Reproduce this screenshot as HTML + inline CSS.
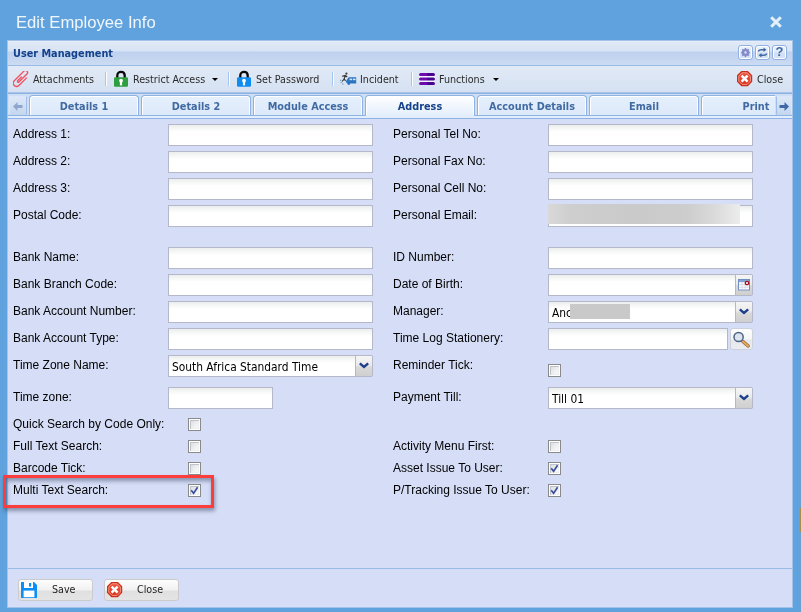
<!DOCTYPE html>
<html><head><meta charset="utf-8"><title>Edit Employee Info</title>
<style>
*{box-sizing:border-box;margin:0;padding:0}
html,body{width:801px;height:612px;overflow:hidden}
body{background:#60a2dd;position:relative;font-family:"Liberation Sans",Arial,sans-serif;font-size:12px;color:#000}
.abs{position:absolute}
.th{font-family:"DejaVu Sans Condensed","Liberation Sans",sans-serif}
#title{left:16px;top:10.5px;color:#f1f6fb;font-size:16.65px;line-height:24px;white-space:nowrap;font-family:"Liberation Sans",sans-serif}
#panel{left:7px;top:40px;width:786px;height:568px;border:1px solid #a3c2ea;background:#d6def7;overflow:hidden}
#hdr{left:0;top:0;width:784px;height:25px;background:linear-gradient(#eef3fb 0,#dfe9f6 1px,#d8e4f5 10px,#bed1ee 11px,#cbdbf2 24px);border-bottom:1px solid #99bbe8}
#hdr .t{left:5px;top:6px;font-weight:bold;font-size:10.8px;color:#15428b;line-height:14px;white-space:nowrap}
.tool{top:4px;width:15px;height:15px;border:1px solid #8fb0e0;border-radius:3px;background:linear-gradient(#e9f1fc 0,#e1ebf9 6px,#d2e0f5 7px,#d6e3f6 100%);box-shadow:inset 0 0 0 1px #fff}
#tb{left:0;top:25px;width:784px;height:27px;background:linear-gradient(#e2eaf6,#d5e1f2);border-bottom:1px solid #a9c4e9}
.bt{top:7px;font-size:10.65px;line-height:14px;color:#2a2a2a;white-space:nowrap}
.sep{top:6px;width:2px;height:14px;border-left:1px solid #a4c6f2;border-right:1px solid #fff}
.dd{top:11.8px;width:0;height:0;border:3px solid transparent;border-top:3.6px solid #000;border-bottom:none}
#strip{left:0;top:52px;width:784px;height:22px;background:#cedff5;border-top:1px solid #8db2e3;overflow:hidden}
#strip2{left:0;top:74px;width:784px;height:4px;background:#e3eefc;border-top:1px solid #8db2e3;border-bottom:1px solid #8db2e3}
.tab{top:1px;width:110px;height:20px;border:1px solid #8db2e3;border-bottom:none;border-radius:4px 4px 0 0;background:linear-gradient(#e6f0fd,#dce9f9);box-shadow:inset 1px 1px 0 #fff,inset -1px 0 0 #fff;text-align:center;font-weight:bold;font-size:10.8px;line-height:14px;padding-top:4px;color:#416aa3;white-space:nowrap;overflow:hidden}
.tab.on{height:21px;background:linear-gradient(#ffffff,#e3eefc);color:#15428b}
.scr{top:2px;height:19px;background:linear-gradient(#dce8f8,#c5d7ef);border:1px solid #b5cdef}
.lb{font-size:12px;line-height:15px;white-space:nowrap;color:#000}
.in{height:22px;border:1px solid #b5b8c8;background:linear-gradient(#eceeee 0,#fff 7px) #fff}
.trg{width:17px;height:22px;border:1px solid #b5b8c8;border-left:none;border-radius:0 2px 2px 0;background:linear-gradient(#f5f5f5 0,#ebebeb 45%,#d9d9d9 55%,#cfcfcf 100%)}
.cb{width:13px;height:13px;border:1px solid #8a8a8a;background:linear-gradient(135deg,#d3d7db,#f6f6f6 70%);box-shadow:inset 0 0 0 1px #fff,inset 2px 2px 0 0 #bfc4cc,inset -2px -2px 0 0 #eceef0}
#ft{left:0;top:527px;width:784px;height:40px;border-top:1px solid #99bbe8;background:#d6def7}
.fb{top:10px;height:22px;width:75px;border:1px solid #cbcbcb;border-radius:3px;background:linear-gradient(#fdfdfd 0,#f1f1f1 10px,#e0e0e0 11px,#e4e4e4 100%);font-size:10.65px;line-height:14px;color:#222}
</style></head><body>
<div id="wrap" style="position:absolute;left:0;top:0;width:801px;height:612px;will-change:transform">
<div class="abs" id="title">Edit Employee Info</div>
<svg class="abs" style="left:769px;top:15px" width="14" height="14" viewBox="0 0 14 14"><path d="M2.2 2.2 L11.8 11.8 M11.8 2.2 L2.2 11.8" stroke="#e6f0f9" stroke-width="3" /></svg>
<div class="abs" id="panel">
 <div class="abs" id="hdr"><div class="abs t th">User Management</div>
  <div class="abs tool" style="left:730px"><svg class="abs" style="left:1px;top:1px" width="11" height="11" viewBox="0 0 11 11"><circle cx="5.5" cy="5.5" r="2.4" fill="none" stroke="#838bc9" stroke-width="2.4"/><path d="M5.5 1V2.4M5.5 8.6V10M1 5.5H2.4M8.6 5.5H10M2.3 2.3L3.3 3.3M7.7 7.7L8.7 8.7M2.3 8.7L3.3 7.7M7.7 3.3L8.7 2.3" stroke="#838bc9" stroke-width="1.7"/></svg></div>
  <div class="abs tool" style="left:747px"><svg class="abs" style="left:1px;top:1px" width="11" height="11" viewBox="0 0 11 11"><path d="M1.5 4.5 C1.5 3 3 2.8 4.5 2.8 H7" fill="none" stroke="#3f6aa5" stroke-width="1.5"/><path d="M6.5 0.5 L9.5 2.8 L6.5 5.1Z" fill="#3f6aa5"/><path d="M9.5 6.5 C9.5 8 8 8.2 6.5 8.2 H4" fill="none" stroke="#3f6aa5" stroke-width="1.5"/><path d="M4.5 5.9 L1.5 8.2 L4.5 10.5Z" fill="#3f6aa5"/></svg></div>
  <div class="abs tool" style="left:764px"><span class="abs" style="left:0;top:-1px;width:13px;text-align:center;font:bold 13px/14px 'Liberation Sans',sans-serif;color:#3f6aa5">?</span></div>
 </div>
 <div class="abs" id="tb">
  <svg class="abs" style="left:5px;top:5px" width="17" height="17" viewBox="0 0 17 17"><g transform="translate(7.5,7.1) rotate(-45)"><path d="M1.4 -0.1 H-3.9 A0.9 0.9 0 0 0 -3.9 1.7 H7.4 A2.1 2.1 0 0 0 7.4 -2.5 H-6.3 A3.3 3.3 0 0 0 -6.3 4.1 H4.45" fill="none" stroke="#f44f5e" stroke-width="1.3" stroke-linecap="round"/></g></svg>
  <div class="abs bt th" style="left:25px">Attachments</div>
  <div class="abs sep" style="left:97px"></div>
  <svg class="abs" style="left:105px;top:4px" width="16" height="17" viewBox="0 0 16 17"><path d="M4.3 8 V5.4 C4.3 0.7 11.7 0.7 11.7 5.4 V8" fill="none" stroke="#0a0a0a" stroke-width="2.3"/><rect x="1" y="7.3" width="14" height="9.4" rx="1.2" fill="#2f9e3e"/><circle cx="8" cy="10.6" r="1.9" fill="#fff"/><rect x="6.9" y="10.8" width="2.2" height="4.6" fill="#fff"/></svg>
  <div class="abs bt th" style="left:125px">Restrict Access</div>
  <div class="abs dd" style="left:204.3px"></div>
  <div class="abs sep" style="left:220px"></div>
  <svg class="abs" style="left:228px;top:4px" width="16" height="17" viewBox="0 0 16 17"><path d="M4.3 8 V5.4 C4.3 0.7 11.7 0.7 11.7 5.4 V8" fill="none" stroke="#0a0a0a" stroke-width="2.3"/><rect x="1" y="7.3" width="14" height="9.4" rx="1.2" fill="#0d8cf2"/><circle cx="8" cy="10.6" r="1.9" fill="#fff"/><rect x="6.9" y="10.8" width="2.2" height="4.6" fill="#fff"/></svg>
  <div class="abs bt th" style="left:248px">Set Password</div>
  <div class="abs sep" style="left:324px"></div>
  <svg class="abs" style="left:331px;top:6px" width="18" height="14" viewBox="0 0 18 14"><circle cx="7.4" cy="1.6" r="1.1" fill="#3a3a3a"/><path d="M3.2 4.4 L6.4 3.5 L8.2 5 M6.4 3.5 L5.1 7 L6.6 8.8 M5.1 7 L3.2 9.4" fill="none" stroke="#3a3a3a" stroke-width="1.2"/><path d="M1.6 10.3h1.2M3.2 12h1.2M1.2 8.3h1" stroke="#4a88c8" stroke-width="1"/><path d="M6.8 9.6 L9.6 5.3 H17.2 V11.6 H8 Z" fill="#2a74c0"/><rect x="10.6" y="6.6" width="2.6" height="1.6" fill="#d6e4f5"/><rect x="14" y="6.6" width="2.6" height="1.6" fill="#d6e4f5"/><circle cx="9.8" cy="11.8" r="1.3" fill="#2a74c0"/></svg>
  <div class="abs bt th" style="left:352px">Incident</div>
  <div class="abs sep" style="left:403px"></div>
  <svg class="abs" style="left:410px;top:6px" width="18" height="14" viewBox="0 0 18 14"><defs><linearGradient id="pg" x1="0" y1="0" x2="1" y2="0"><stop offset="0.48" stop-color="#6c0bab"/><stop offset="0.52" stop-color="#4a0590"/></linearGradient></defs><rect x="1" y="1.5" width="16" height="11" fill="#fff" opacity=".6"/><rect x="1" y="1" width="16" height="3" rx="1.5" fill="url(#pg)"/><rect x="1" y="5.5" width="16" height="3" rx="1.5" fill="url(#pg)"/><rect x="1" y="10" width="16" height="3" rx="1.5" fill="url(#pg)"/></svg>
  <div class="abs bt th" style="left:431px">Functions</div>
  <div class="abs dd" style="left:484.6px"></div>
  <svg class="abs" style="left:729px;top:5px" width="16" height="16" viewBox="0 0 16 16"><defs><linearGradient id="g1" x1="0" y1="0" x2="0" y2="1"><stop offset="0" stop-color="#ee5a44"/><stop offset="1" stop-color="#d8301a"/></linearGradient></defs><path d="M4.6 0.6 H10.6 L14.6 4.6 V10.6 L10.6 14.6 H4.6 L0.6 10.6 V4.6 Z" fill="url(#g1)" stroke="#c9301c" stroke-width="1.2"/><path d="M5.1 1.8 H10.1 L13.4 5.1 V10.1 L10.1 13.4 H5.1 L1.8 10.1 V5.1 Z" fill="none" stroke="#f59a88" stroke-width="0.9"/><path d="M4.6 4.6 L10.6 10.6 M10.6 4.6 L4.6 10.6" stroke="#fff" stroke-width="2.5"/></svg>
  <div class="abs bt th" style="left:749px">Close</div>
 </div>
 <div class="abs" id="strip">
  <div class="abs tab th" style="left:21px">Details 1</div>
  <div class="abs tab th" style="left:133px">Details 2</div>
  <div class="abs tab th" style="left:245px">Module Access</div>
  <div class="abs tab on th" style="left:357px">Address</div>
  <div class="abs tab th" style="left:469px">Account Details</div>
  <div class="abs tab th" style="left:581px">Email</div>
  <div class="abs tab th" style="left:693px">Print</div>
  <div class="abs" style="left:0;top:1px;width:21px;height:20px;background:#cedff5"></div><div class="abs scr" style="left:1px;width:18px;border-color:#dbe7f8 #9fbde8 #c5d7ef #dbe7f8"><svg class="abs" style="left:3px;top:5px" width="10" height="9" viewBox="0 0 10 9"><path d="M0 4.5 L4.5 0 V3 H9.5 V6 H4.5 V9 Z" fill="#8ea6cc"/></svg></div>
  <div class="abs" style="left:767px;top:1px;width:17px;height:20px;background:#cedff5"></div><div class="abs scr" style="left:768px;width:16px;border-color:#dbe7f8 #dbe7f8 #c5d7ef #9fbde8"><svg class="abs" style="left:2px;top:5px" width="10" height="9" viewBox="0 0 10 9"><path d="M10 4.5 L5.5 0 V3 H0.5 V6 H5.5 V9 Z" fill="#3f6aa5"/></svg></div>
 </div>
 <div class="abs" id="strip2"><div class="abs" style="left:358px;top:-1px;width:108px;height:1px;background:#e1edfc"></div><div class="abs" style="left:357px;top:-1px;width:1px;height:1px;background:#8db2e3"></div><div class="abs" style="left:466px;top:-1px;width:1px;height:1px;background:#8db2e3"></div></div>
 <div id="form">
<div class="abs lb" style="left:5px;top:86px">Address 1:</div>
<div class="abs in" style="left:160px;top:83px;width:205px"></div>
<div class="abs lb" style="left:5px;top:113px">Address 2:</div>
<div class="abs in" style="left:160px;top:110px;width:205px"></div>
<div class="abs lb" style="left:5px;top:140px">Address 3:</div>
<div class="abs in" style="left:160px;top:137px;width:205px"></div>
<div class="abs lb" style="left:5px;top:167px">Postal Code:</div>
<div class="abs in" style="left:160px;top:164px;width:205px"></div>
<div class="abs lb" style="left:5px;top:209px">Bank Name:</div>
<div class="abs in" style="left:160px;top:206px;width:205px"></div>
<div class="abs lb" style="left:5px;top:236px">Bank Branch Code:</div>
<div class="abs in" style="left:160px;top:233px;width:205px"></div>
<div class="abs lb" style="left:5px;top:263px">Bank Account Number:</div>
<div class="abs in" style="left:160px;top:260px;width:205px"></div>
<div class="abs lb" style="left:5px;top:290px">Bank Account Type:</div>
<div class="abs in" style="left:160px;top:287px;width:205px"></div>
<div class="abs lb" style="left:385px;top:86px">Personal Tel No:</div>
<div class="abs in" style="left:540px;top:83px;width:205px"></div>
<div class="abs lb" style="left:385px;top:113px">Personal Fax No:</div>
<div class="abs in" style="left:540px;top:110px;width:205px"></div>
<div class="abs lb" style="left:385px;top:140px">Personal Cell No:</div>
<div class="abs in" style="left:540px;top:137px;width:205px"></div>
<div class="abs lb" style="left:385px;top:167px">Personal Email:</div>
<div class="abs in" style="left:540px;top:164px;width:205px"></div>
<div class="abs lb" style="left:385px;top:209px">ID Number:</div>
<div class="abs in" style="left:540px;top:206px;width:205px"></div>
<div class="abs" style="left:540px;top:163px;width:192px;height:20px;background:linear-gradient(90deg,#d9d9d9 0,#cecece 12%,#cacaca 45%,#cdcdcd 72%,#d9d9d9 86%,#ececec 100%)"></div>
<div class="abs lb" style="left:5px;top:317px">Time Zone Name:</div>
<div class="abs in" style="left:160px;top:314px;width:188px"><span class="abs th" style="left:3px;top:4px;font-size:11.85px;line-height:15px;white-space:nowrap">South Africa Standard Time</span></div>
<div class="abs trg" style="left:348px;top:314px"><svg class="abs" style="left:3px;top:6px" width="10" height="8" viewBox="0 0 10 8"><path d="M0.8 1.3 L5 5 L9.2 1.3" fill="none" stroke="#1d3f8c" stroke-width="2.4"/></svg></div>
<div class="abs lb" style="left:5px;top:349px">Time zone:</div>
<div class="abs in" style="left:160px;top:346px;width:105px"></div>
<div class="abs lb" style="left:385px;top:236px">Date of Birth:</div>
<div class="abs in" style="left:540px;top:233px;width:188px"></div>
<div class="abs trg" style="left:728px;top:233px"><svg class="abs" style="left:2px;top:4px" width="12" height="12" viewBox="0 0 12 12"><rect x="0.5" y="0.5" width="11" height="10.5" fill="#fff" stroke="#6f8fc4"/><rect x="1" y="1" width="10" height="2.2" fill="#86a3d6"/><path d="M1 5.6H11M1 8.2H11M4 3.2V10.5M7.2 3.2V10.5" stroke="#d5dae6" stroke-width="1"/><circle cx="9" cy="4" r="1.7" fill="#fff" stroke="#a3121f" stroke-width="1.3"/></svg></div>
<div class="abs lb" style="left:385px;top:263px">Manager:</div>
<div class="abs in" style="left:540px;top:260px;width:188px"><span class="abs th" style="left:3px;top:4px;font-size:11.85px;line-height:15px">Anc</span></div>
<div class="abs" style="left:562px;top:263px;width:60px;height:15px;background:#c9c9c9"></div>
<div class="abs trg" style="left:728px;top:260px"><svg class="abs" style="left:3px;top:6px" width="10" height="8" viewBox="0 0 10 8"><path d="M0.8 1.3 L5 5 L9.2 1.3" fill="none" stroke="#1d3f8c" stroke-width="2.4"/></svg></div>
<div class="abs lb" style="left:385px;top:290px">Time Log Stationery:</div>
<div class="abs in" style="left:540px;top:287px;width:180px"></div>
<div class="abs" style="left:722px;top:287px;width:23px;height:22px;border:1px solid #cdd1dc;border-radius:3px;background:linear-gradient(#fdfdfd 0,#f6f6f7 50%,#e7e8ec 55%,#ebecef 100%)"><svg class="abs" style="left:1px;top:1px" width="20" height="19" viewBox="0 0 20 19"><path d="M10.6 11.2 L16.2 16" stroke="#8a6a3c" stroke-width="3.4" stroke-linecap="round"/><path d="M10.9 11.4 L16.1 15.9" stroke="#eaa85e" stroke-width="2" stroke-linecap="round"/><circle cx="6.6" cy="7" r="4.6" fill="#dbe4ee" stroke="#4d6384" stroke-width="1.5"/></svg></div>
<div class="abs lb" style="left:385px;top:317px">Reminder Tick:</div>
<div class="abs cb" style="left:540px;top:323px"></div>
<div class="abs lb" style="left:385px;top:349px">Payment Till:</div>
<div class="abs in" style="left:540px;top:346px;width:188px"><span class="abs th" style="left:3px;top:4px;font-size:11.85px;line-height:15px">Till 01</span></div>
<div class="abs trg" style="left:728px;top:346px"><svg class="abs" style="left:3px;top:6px" width="10" height="8" viewBox="0 0 10 8"><path d="M0.8 1.3 L5 5 L9.2 1.3" fill="none" stroke="#1d3f8c" stroke-width="2.4"/></svg></div>
<div class="abs lb" style="left:5px;top:376px">Quick Search by Code Only:</div>
<div class="abs cb" style="left:180px;top:377px"></div>
<div class="abs lb" style="left:5px;top:398px">Full Text Search:</div>
<div class="abs cb" style="left:180px;top:399px"></div>
<div class="abs lb" style="left:5px;top:420px">Barcode Tick:</div>
<div class="abs cb" style="left:180px;top:421px"></div>
<div class="abs lb" style="left:5px;top:442px">Multi Text Search:</div>
<div class="abs cb" style="left:180px;top:443px"><svg class="abs" style="left:1px;top:1px" width="9" height="9" viewBox="0 0 9 9"><path d="M1.2 4.2 L3.6 7.2 L7.6 1.2" fill="none" stroke="#3b4f9f" stroke-width="1.7"/></svg></div>
<div class="abs lb" style="left:385px;top:398px">Activity Menu First:</div>
<div class="abs cb" style="left:540px;top:399px"></div>
<div class="abs lb" style="left:385px;top:420px">Asset Issue To User:</div>
<div class="abs cb" style="left:540px;top:421px"><svg class="abs" style="left:1px;top:1px" width="9" height="9" viewBox="0 0 9 9"><path d="M1.2 4.2 L3.6 7.2 L7.6 1.2" fill="none" stroke="#3b4f9f" stroke-width="1.7"/></svg></div>
<div class="abs lb" style="left:385px;top:442px">P/Tracking Issue To User:</div>
<div class="abs cb" style="left:540px;top:443px"><svg class="abs" style="left:1px;top:1px" width="9" height="9" viewBox="0 0 9 9"><path d="M1.2 4.2 L3.6 7.2 L7.6 1.2" fill="none" stroke="#3b4f9f" stroke-width="1.7"/></svg></div>
</div>
 <div class="abs" id="ft">
  <div class="abs fb" style="left:10px"><svg class="abs" style="left:2px;top:2px" width="16" height="16" viewBox="0 0 16 16"><path d="M0 0 H13 L16 3 V16 H0 Z" fill="#0d8ff5"/><rect x="3" y="0" width="9" height="6" fill="#fff"/><rect x="8" y="1" width="2.2" height="3.6" fill="#0d8ff5"/><rect x="2.6" y="8.6" width="10.8" height="6.6" fill="#fff"/></svg><span class="abs th" style="left:33px;top:3px">Save</span></div>
  <div class="abs fb" style="left:96px"><svg class="abs" style="left:2px;top:2px" width="16" height="16" viewBox="0 0 16 16"><defs><linearGradient id="g2" x1="0" y1="0" x2="0" y2="1"><stop offset="0" stop-color="#ee5a44"/><stop offset="1" stop-color="#d8301a"/></linearGradient></defs><path d="M4.6 0.6 H10.6 L14.6 4.6 V10.6 L10.6 14.6 H4.6 L0.6 10.6 V4.6 Z" fill="url(#g2)" stroke="#c9301c" stroke-width="1.2"/><path d="M5.1 1.8 H10.1 L13.4 5.1 V10.1 L10.1 13.4 H5.1 L1.8 10.1 V5.1 Z" fill="none" stroke="#f59a88" stroke-width="0.9"/><path d="M4.6 4.6 L10.6 10.6 M10.6 4.6 L4.6 10.6" stroke="#fff" stroke-width="2.5"/></svg><span class="abs th" style="left:32px;top:3px">Close</span></div>
 </div>
</div>
<div class="abs" style="left:3px;top:475px;width:211px;height:33px;border:3px solid #fd3c3c;box-shadow:1px 3px 4px rgba(40,50,80,.45),inset 1px 3px 4px rgba(40,50,80,.45)"></div>
<div class="abs" style="left:800px;top:0;width:1px;height:612px;background:#6a9fd0"></div>
<div class="abs" style="left:800px;top:508px;width:1px;height:24px;background:#a98d4a"></div>
</div>
</body></html>
